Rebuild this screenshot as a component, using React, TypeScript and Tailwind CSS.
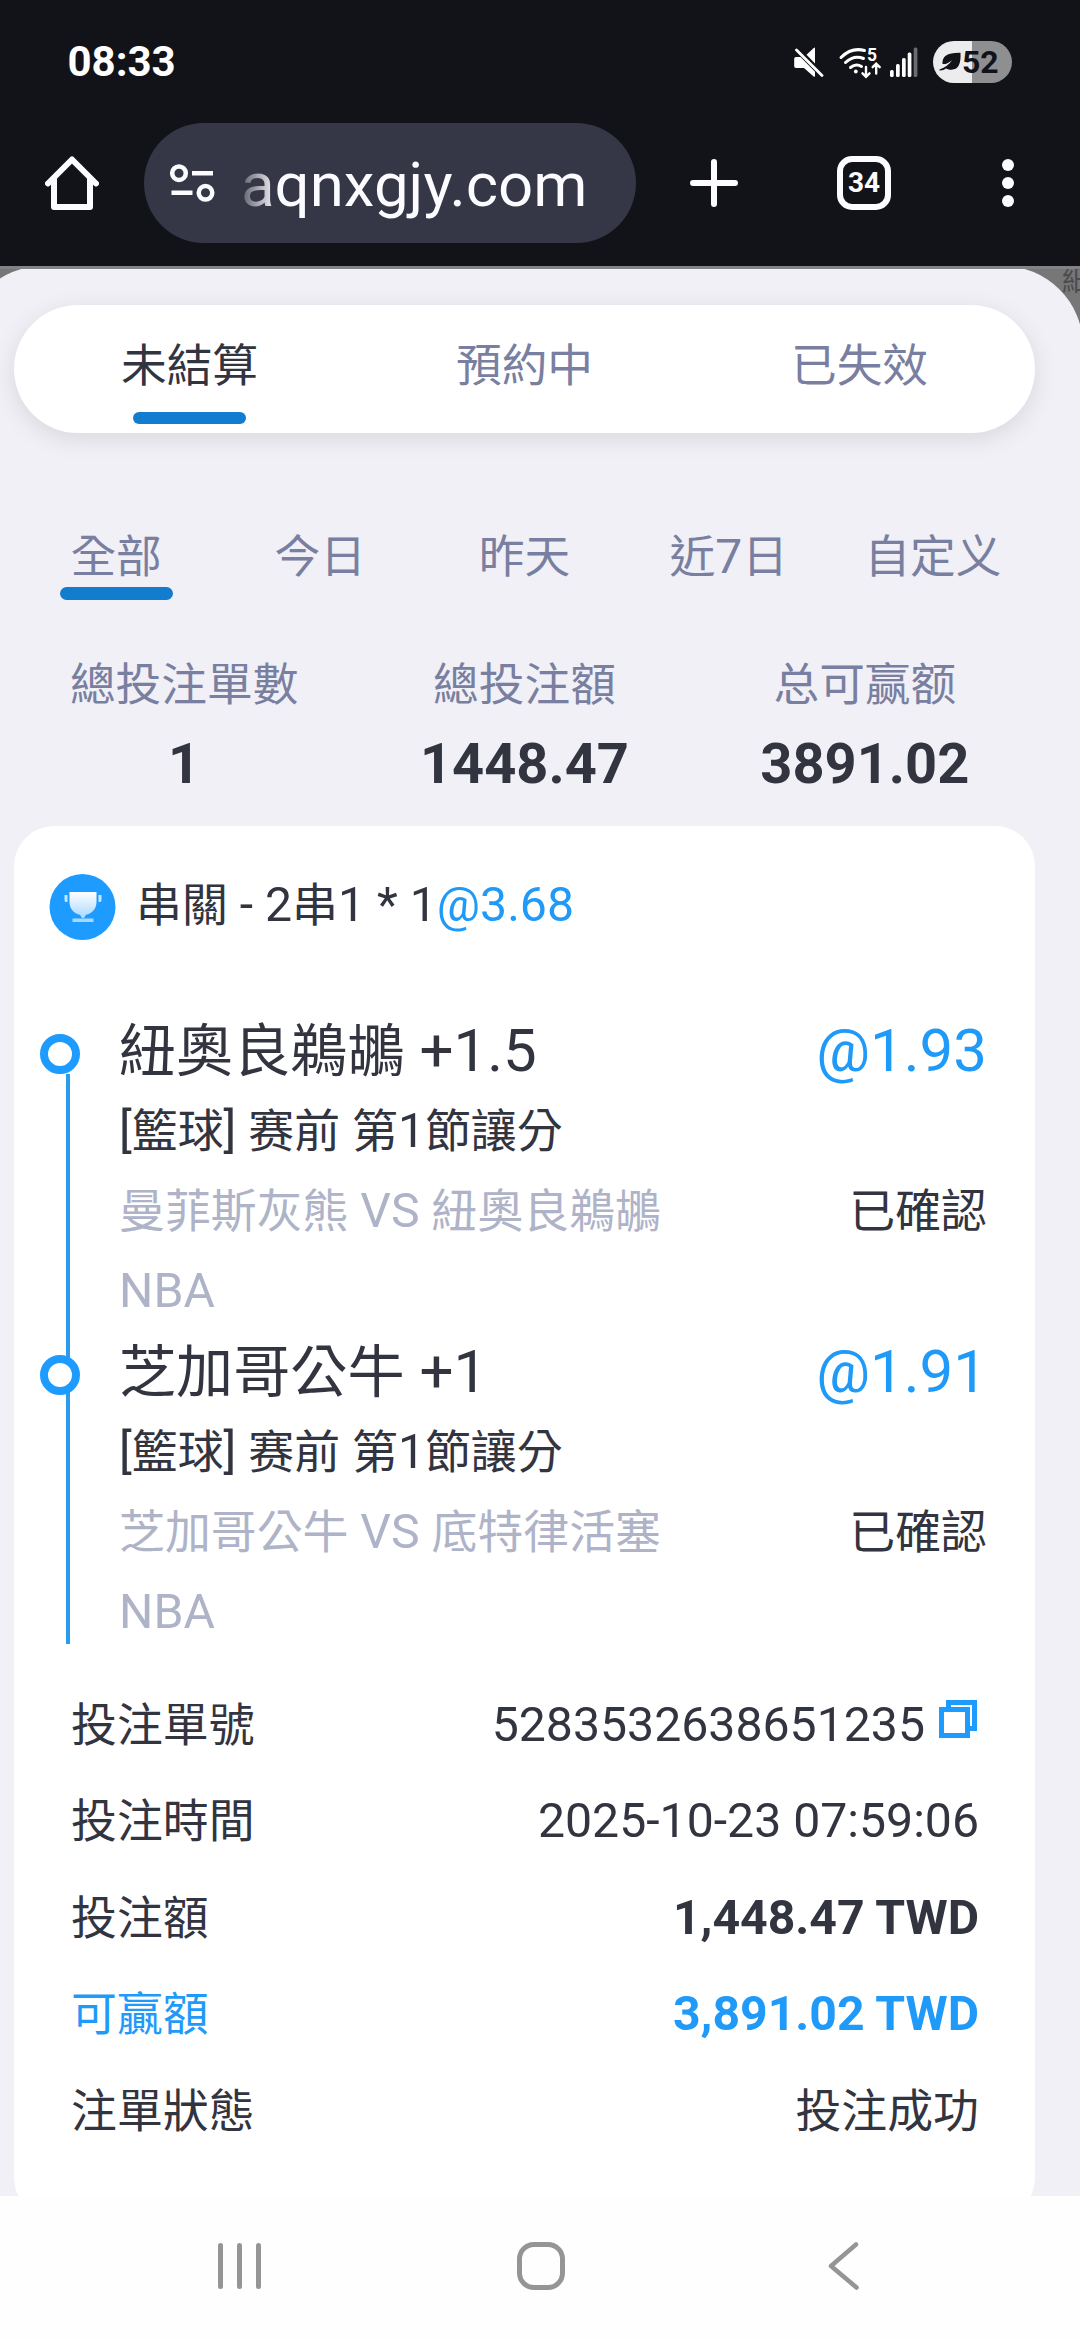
import { Fragment } from "react";

type Leg = {
  pick: string;
  odds: string;
  market: string;
  match: string;
  status: string;
  league: string;
};

const TABS = ["未結算", "預約中", "已失效"];
const RANGES = ["全部", "今日", "昨天", "近7日", "自定义"];

const STATS = [
  { label: "總投注單數", value: "1" },
  { label: "總投注額", value: "1448.47" },
  { label: "总可赢额", value: "3891.02" },
];

const LEGS: Leg[] = [
  {
    pick: "紐奧良鵜鶘 +1.5",
    odds: "@1.93",
    market: "[籃球] 赛前 第1節讓分",
    match: "曼菲斯灰熊 VS 紐奧良鵜鶘",
    status: "已確認",
    league: "NBA",
  },
  {
    pick: "芝加哥公牛 +1",
    odds: "@1.91",
    market: "[籃球] 赛前 第1節讓分",
    match: "芝加哥公牛 VS 底特律活塞",
    status: "已確認",
    league: "NBA",
  },
];

const DETAILS = [
  { label: "投注單號", value: "5283532638651235", copy: true },
  { label: "投注時間", value: "2025-10-23 07:59:06" },
  { label: "投注額", value: "1,448.47 TWD", bold: true },
  { label: "可贏額", value: "3,891.02 TWD", bold: true, accent: true },
  { label: "注單狀態", value: "投注成功" },
];

// Chinese runs are set slightly smaller than the latin text around them
function Txt({ children }: { children: string }) {
  return (
    <>
      {children.split(/([\u3400-\u9fff]+)/).map((part, i) =>
        i % 2 ? (
          <span key={i} className="text-[0.952em] leading-none">
            {part}
          </span>
        ) : (
          <Fragment key={i}>{part}</Fragment>
        )
      )}
    </>
  );
}

function MuteIcon() {
  return (
    <svg viewBox="0 0 30 30" className="h-[30px] w-[30px]" fill="#fff">
      <path d="M21 1v15.5l-8.5-8.8L19.5 1.3Q21 0 21 1z" />
      <path d="M2 10h4.5L21 24.8V29q0 1.4-1.4.4L10 21H2q-1.8 0-1.8-1.8v-7.4Q.2 10 2 10z" />
      <path d="M2.5 3l25.5 25.5" stroke="#fff" strokeWidth="2.8" strokeLinecap="round" />
    </svg>
  );
}

function WifiIcon() {
  return (
    <svg viewBox="0 0 42 32" className="h-8 w-[43px] overflow-visible" fill="none" stroke="#fff" strokeWidth="3" strokeLinecap="round">
      <path d="M1.5 10.5Q12 0 25 3.5" />
      <path d="M6 15.5Q14.5 7.500 24 11.500" />
      <path d="M11 20.5q5.500-4.500 11-1" />
      <circle cx="16.300" cy="24.500" r="1.900" fill="#fff" stroke="none" />
      <path d="M26.500 20v9.500m-3.500-3.200l3.500 3.500 3.500-3.500M36.700 26.500V17m-3.500 3.200l3.500-3.500 3.500 3.500" strokeWidth="2.400" />
      <text x="27.500" y="14" fontSize="17.500" fontWeight="700" fontFamily="Roboto, sans-serif" fill="#fff" stroke="none">
        5
      </text>
    </svg>
  );
}

function SignalIcon() {
  return (
    <svg viewBox="0 0 28 30" className="h-[30px] w-7" fill="#fff">
      <rect x="0" y="23" width="3.7" height="7" rx="1.5" />
      <rect x="6" y="17" width="3.7" height="13" rx="1.5" />
      <rect x="12" y="11" width="3.7" height="19" rx="1.5" />
      <rect x="17.7" y="5.5" width="3.7" height="24.5" rx="1.5" />
      <rect x="23.7" y="0.5" width="3.7" height="29.5" rx="1.5" fill="#6a6b6f" />
    </svg>
  );
}

function LeafIcon() {
  return (
    <svg viewBox="0 0 23 20" className="h-5 w-[23px]">
      <path d="M3.500 12C3 4 8.500.5 21.500.8 22 11 20 17.500 12.500 17.800c-2 0-4-.5-5.500-1.300-1.500 1.300-3.500 2-6 2-.8 0-.8-1 0-1.300 5-1.600 9-4.500 12-9-4 3-6.500 4.200-9.500 3.800z" fill="#121318" />
    </svg>
  );
}

function HomeIcon() {
  return (
    <svg viewBox="0 0 54 54" className="h-[54px] w-[54px]" fill="none" stroke="#fcfbff" strokeWidth="6" strokeLinecap="round" strokeLinejoin="round">
      <path d="M3 27.5L27 3.500l24 24" />
      <path d="M9 24v27h36V24" />
    </svg>
  );
}

function TuneIcon() {
  return (
    <svg viewBox="0 0 45 38" className="h-[38px] w-[45px]" fill="none" stroke="#fcfbff" strokeWidth="4.5">
      <circle cx="9" cy="9.2" r="6.8" />
      <path d="M22 9.200h21M1.500 28.800h21" />
      <circle cx="35.5" cy="28.8" r="6.8" />
    </svg>
  );
}

function TrophyIcon() {
  return (
    <svg viewBox="0 0 66 66" className="h-[66px] w-[67px]">
      <defs>
        <linearGradient id="cup" x1="0" y1="0" x2="0" y2="1">
          <stop offset="0" stopColor="#fff" />
          <stop offset="1" stopColor="#a8d8ff" />
        </linearGradient>
      </defs>
      <circle cx="33" cy="33" r="33" fill="#1e9bff" />
      <path d="M20 18h27v10c0 7-4.500 11.500-10.500 12.800L34.500 44h-2l-2-3.200C24.500 39.500 20 35 20 28z" fill="url(#cup)" />
      <path d="M15 21h3v7h-1.500Q15 28 15 26zM49 21h3v5q0 2-1.500 2H49z" fill="#c6e6ff" />
      <path d="M23 44.500h21V48H23z" fill="#a8d8ff" />
    </svg>
  );
}

function CopyIcon() {
  return (
    <svg viewBox="0 0 38 38" className="h-[38px] w-[38px]" fill="none" stroke="#1e9bff" strokeWidth="5">
      <path d="M9.500 7V2.500h26v26H31" />
      <path d="M2.500 9.500h26v26h-26z" />
    </svg>
  );
}

function StatusBar() {
  return (
    <div className="flex h-[42px] items-center pl-[67.500px] pr-[68px]">
      <span className="text-[42px] font-bold leading-[42px] text-white">08:33</span>
      <div className="ml-auto flex items-center">
        <MuteIcon />
        <div className="ml-[15px] pt-0.5">
          <WifiIcon />
        </div>
        <div className="ml-2">
          <SignalIcon />
        </div>
        <div className="ml-[15px] flex h-[42px] w-[79px] items-center rounded-full bg-linear-to-r from-[#ececee] from-50% to-[#8f8f92] to-50% pl-[6px]">
          <LeafIcon />
          <span className="text-[32px] font-bold leading-[42px] text-[#121318]">52</span>
        </div>
      </div>
    </div>
  );
}

function Toolbar() {
  return (
    <div className="mt-10 flex h-[120px] items-center pl-[45px]">
      <HomeIcon />
      <div className="ml-[45px] flex h-[120px] w-[492px] items-center rounded-full bg-[#353747] pl-[26px]">
        <TuneIcon />
        <span className="ml-[26px] mt-[3px] bg-linear-to-r from-[#fcfbff]/20 to-[#fcfbff] to-[36px] bg-clip-text text-[61.800px] leading-[90px] text-transparent">
          aqnxgjy.com
        </span>
      </div>
      <svg viewBox="0 0 48 48" className="ml-[54px] h-12 w-12" stroke="#fcfbff" strokeWidth="6" strokeLinecap="round">
        <path d="M24 3v42M3 24h42" />
      </svg>
      <div className="ml-[99px] flex h-[54px] w-[54px] items-center justify-center rounded-[15px] border-[6px] border-[#fcfbff] text-[28px] font-bold text-[#fcfbff]">
        34
      </div>
      <div className="ml-[111px] flex flex-col gap-1.5">
        <i className="h-3 w-3 rounded-full bg-[#fcfbff]" />
        <i className="h-3 w-3 rounded-full bg-[#fcfbff]" />
        <i className="h-3 w-3 rounded-full bg-[#fcfbff]" />
      </div>
    </div>
  );
}

function BetLeg({ leg, first }: { leg: Leg; first: boolean }) {
  return (
    <div className="relative flex h-[321px]">
      <div className={first ? "ml-[52px] mt-[61px] w-1 bg-[#2b9bee]" : "mb-[11px] ml-[52px] w-1 bg-[#2b9bee]"} />
      <span className="absolute left-[26px] top-[20.500px] h-10 w-10 rounded-full border-[8px] border-[#1e9bff] bg-white" />
      <div className="ml-[49px] mr-[48px] flex-1">
        <div className="mb-px flex h-[76px] justify-between text-[60px] leading-[76px]">
          <h3>
            <Txt>{leg.pick}</Txt>
          </h3>
          <span className="text-[#1f9af8]">{leg.odds}</span>
        </div>
        <p className="h-20 leading-[81px]">
          <Txt>{leg.market}</Txt>
        </p>
        <div className="flex h-20 justify-between leading-[81px]">
          <p className="text-[#afb3c8]">
            <Txt>{leg.match}</Txt>
          </p>
          <p>
            <Txt>{leg.status}</Txt>
          </p>
        </div>
        <p className="h-20 leading-[82px] text-[#afb3c8]">{leg.league}</p>
      </div>
    </div>
  );
}

function BetCard() {
  return (
    <article className="mt-8 h-[1392px] rounded-[40px] bg-white pt-12 text-[48.200px] text-[#32343f]">
      <header className="flex h-[66px] pl-[35px]">
        <TrophyIcon />
        <h2 className="ml-[20px] leading-[62px]">
          <Txt>串關 - 2串1 * 1</Txt>
          <span className="text-[#1f9af8]">@3.68</span>
        </h2>
      </header>

      <div className="mt-[73px]">
        {LEGS.map((leg, idx) => (
          <BetLeg key={idx} leg={leg} first={idx === 0} />
        ))}
      </div>

      <dl className="mt-[22px] pl-[57px] pr-[56px]">
        {DETAILS.map((row) => (
          <div key={row.label} className={`flex h-[96.400px] justify-between leading-[96px] ${row.accent ? "text-[#1f9af8]" : ""}`}>
            <dt>
              <Txt>{row.label}</Txt>
            </dt>
            <dd className={`flex ${row.bold ? "font-bold" : ""}`}>
              <span>
                <Txt>{row.value}</Txt>
              </span>
              {row.copy && (
                <span className="ml-[14px] mr-0.5 mt-[23px]">
                  <CopyIcon />
                </span>
              )}
            </dd>
          </div>
        ))}
      </dl>
    </article>
  );
}

function NavBar() {
  return (
    <nav className="flex h-[144px] items-center bg-[#fefefe] pb-[4px] pl-[218px]">
      <div className="flex gap-[14.500px]">
        <i className="h-[46px] w-[4.500px] rounded-full bg-[#959595]" />
        <i className="h-[46px] w-[4.500px] rounded-full bg-[#959595]" />
        <i className="h-[46px] w-[4.500px] rounded-full bg-[#959595]" />
      </div>
      <div className="ml-[256.500px] h-12 w-12 rounded-[17px] border-[5px] border-[#959595]" />
      <svg viewBox="0 0 31 48" className="ml-[263px] h-12 w-[31px]" fill="none" stroke="#959595" strokeWidth="4.5" strokeLinecap="round" strokeLinejoin="round">
        <path d="M28 2.500L3 24l25.500 21.500" />
      </svg>
    </nav>
  );
}

export default function App() {
  return (
    <div lang="zh-Hant" className="h-[2340px] w-[1080px] overflow-hidden bg-[#121318] font-[Roboto,'Noto_Sans_CJK_TC','Noto_Sans_CJK_SC',sans-serif]">
      <div className="h-[266px] pt-[41px]">
        <StatusBar />
        <Toolbar />
      </div>

      <main className="relative h-[1930px] overflow-hidden border-t-[3px] border-[#838387] bg-[#777777]">
        {/* page title behind the dimmed backdrop */}
        <span className="absolute left-[1062px] top-[-3px] w-[60px] text-[29px] leading-[30px] text-[#4c4c50]">細</span>

        <section className="relative -ml-[37px] -mt-[3px] h-[1930px] w-[1120px] rounded-t-[80px] bg-[#f0f0f6] pl-[51px] pr-[48px] pt-[39px] text-[48px] text-[#797fa0]">
          <div className="flex h-[128px] rounded-full bg-white px-2 pt-[31px] shadow-[0_6px_24px_rgba(0,0,0,0.1)]">
            {TABS.map((tab, idx) => (
              <button key={tab} className="flex flex-1 flex-col items-center">
                <span className={`h-[60px] leading-[60px] ${idx === 0 ? "text-[#32343f]" : ""}`}>
                  <Txt>{tab}</Txt>
                </span>
                {idx === 0 && <i className="mt-4 h-3 w-[113px] rounded-full bg-[#127ccf]" />}
              </button>
            ))}
          </div>

          <div className="mt-[94px] flex h-[73px]">
            {RANGES.map((range, idx) => (
              <button key={range} className="flex flex-1 flex-col items-center">
                <span className="h-[60px] leading-[60px]">
                  <Txt>{range}</Txt>
                </span>
                {idx === 0 && <i className="h-[13px] w-[113px] rounded-full bg-[#127ccf]" />}
              </button>
            ))}
          </div>

          <div className="mt-[55px] grid grid-cols-3 text-center">
            {STATS.map((stat) => (
              <div key={stat.label}>
                <p className="h-[60px] leading-[60px]">
                  <Txt>{stat.label}</Txt>
                </p>
                <p className="mt-[19px] text-[56px] font-bold leading-[60px] text-[#32343f]">{stat.value}</p>
              </div>
            ))}
          </div>

          <BetCard />
        </section>
      </main>

      <NavBar />
    </div>
  );
}
